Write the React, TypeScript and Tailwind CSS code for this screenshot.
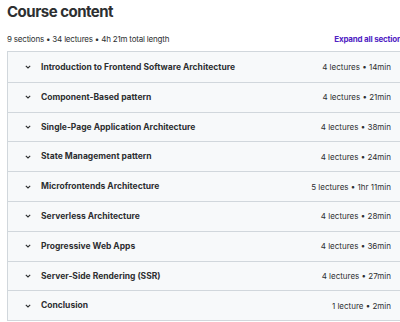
import React from 'react';

const sections = [
  { title: 'Introduction to Frontend Software Architecture', meta: '4 lectures • 14min' },
  { title: 'Component-Based pattern', meta: '4 lectures • 21min' },
  { title: 'Single-Page Application Architecture', meta: '4 lectures • 38min' },
  { title: 'State Management pattern', meta: '4 lectures • 24min' },
  { title: 'Microfrontends Architecture', meta: '5 lectures • 1hr 11min' },
  { title: 'Serverless Architecture', meta: '4 lectures • 28min' },
  { title: 'Progressive Web Apps', meta: '4 lectures • 36min' },
  { title: 'Server-Side Rendering (SSR)', meta: '4 lectures • 27min' },
  { title: 'Conclusion', meta: '1 lecture • 2min' },
];

const Chevron = () => (
  <svg width="6" height="4" viewBox="0 0 6 4" fill="none" className="shrink-0">
    <path d="M0.8 0.8l2.2 2.2 2.2-2.2" stroke="#2d2f31" strokeWidth="1.1" />
  </svg>
);

export default function App() {
  return (
    <div className="w-[400px] h-[322px] overflow-hidden bg-white text-[#2d2f31] font-['Inter',sans-serif]">
      <div className="w-[401px] ml-[7px]">
        <h2 className="text-[15px] font-bold leading-none pt-[4px] tracking-[-0.5px]">Course content</h2>
        <div className="flex justify-between items-center mt-[14px] h-[12px] text-[8px] tracking-[-0.2px]">
          <span>9 sections • 34 lectures • 4h 21m total length</span>
          <span className="font-bold text-[#5022c3] pr-[2px]">Expand all sections</span>
        </div>
        <div className="mt-[6px] border border-[#d1d7dc]">
          {sections.map((s, i) => (
            <div
              key={s.title}
              className={`flex items-center h-[29.8px] bg-[#f7f9fa] pl-[17px] pr-[16px] ${i > 0 ? 'border-t border-[#d1d7dc]' : ''}`}
            >
              <Chevron />
              <span className="ml-[10px] font-bold text-[8.5px] flex-1">{s.title}</span>
              <span className="text-[8px]">{s.meta}</span>
            </div>
          ))}
        </div>
      </div>
    </div>
  );
}
